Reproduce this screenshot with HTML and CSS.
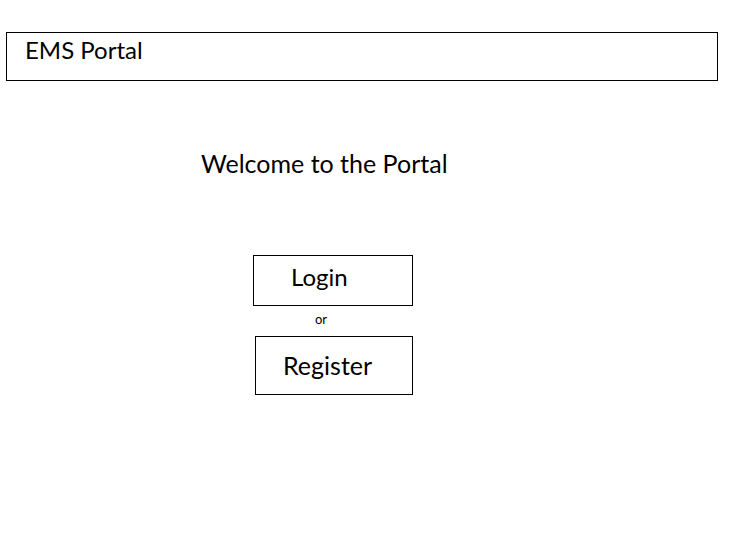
FILE: index.html
```html
<!DOCTYPE html>
<html>
<head>
<meta charset="utf-8">
<link rel="stylesheet" href="styles.css">
</head>
<body>
<header class="topbar"><span class="brand">EMS Portal</span></header>
<main class="main">
  <h1 class="welcome">Welcome to the Portal</h1>
  <div class="actions">
    <button class="btn btn-login">Login</button>
    <div class="or">or</div>
    <button class="btn btn-register">Register</button>
  </div>
</main>
</body>
</html>
```

FILE: styles.css
```css
* { box-sizing: border-box; }
body {
  margin: 0;
  background: #fff;
  color: #000;
  font-family: Lato, "Open Sans", sans-serif;
}
.topbar {
  margin: 32px 0 0 6px;
  width: 712px;
  height: 49px;
  border: 1px solid #000;
  padding: 3px 0 0 18px;
}
.brand {
  font-size: 24px;
  line-height: 28px;
  display: block;
}
.main {
  padding-left: 201px;
}
.welcome {
  margin: 68px 0 0 0;
  font-weight: normal;
  font-size: 25px;
  line-height: 28px;
}
.actions {
  margin: 78px 0 0 52px;
  display: flex;
  flex-direction: column;
  align-items: flex-start;
}
.btn {
  background: #fff;
  border: 1px solid #000;
  font-family: inherit;
  color: #000;
  padding: 0;
  cursor: pointer;
}
.btn-login {
  width: 160px;
  height: 51px;
  padding: 0 0 9px 37px;
  text-align: left;
  font-size: 24px;
}
.or {
  margin: 5px 0 0 62px;
  font-size: 13px;
  line-height: 17px;
}
.btn-register {
  margin: 8px 0 0 2px;
  width: 158px;
  height: 59px;
  padding: 0 0 2px 27px;
  text-align: left;
  font-size: 25px;
}
```
